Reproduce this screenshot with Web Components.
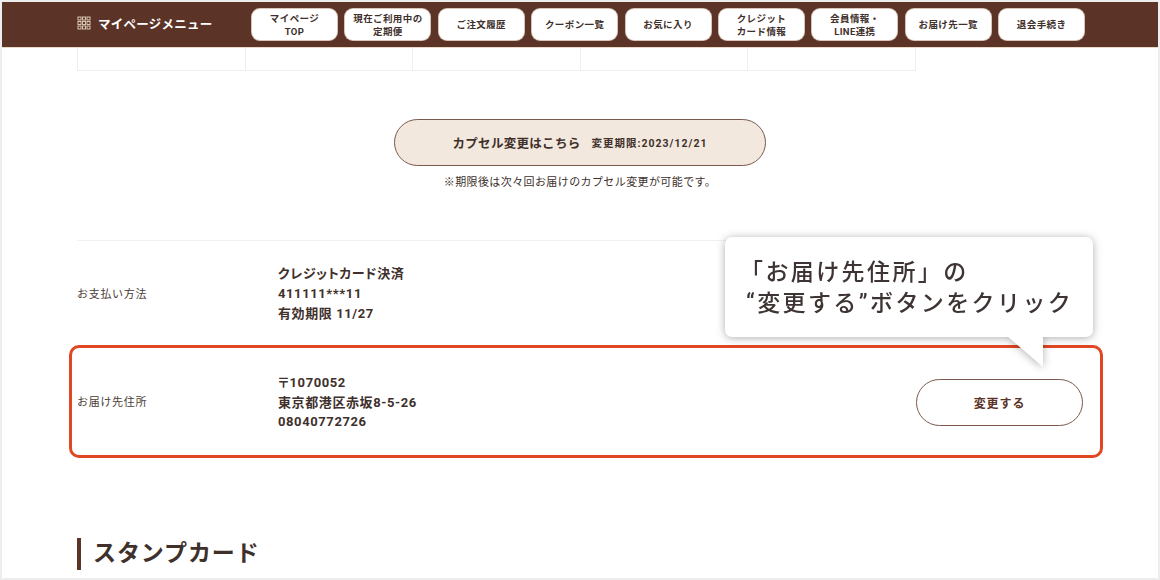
<!DOCTYPE html>
<html lang="ja">
<head>
<meta charset="utf-8">
<title>マイページ</title>
<style>
    html, body { margin: 0; padding: 0; background: #fff; }
    body { font-family: "Roboto", "Noto Sans CJK JP", sans-serif; color: #40302c; }
</style>
</head>
<body>
<mp-page>
    <mp-menubar slot="top">
        <mp-menubtn>マイページ<br>TOP</mp-menubtn>
        <mp-menubtn>現在ご利用中の<br>定期便</mp-menubtn>
        <mp-menubtn>ご注文履歴</mp-menubtn>
        <mp-menubtn>クーポン一覧</mp-menubtn>
        <mp-menubtn>お気に入り</mp-menubtn>
        <mp-menubtn>クレジット<br>カード情報</mp-menubtn>
        <mp-menubtn>会員情報・<br>LINE連携</mp-menubtn>
        <mp-menubtn>お届け先一覧</mp-menubtn>
        <mp-menubtn>退会手続き</mp-menubtn>
    </mp-menubar>
    <mp-stubtable></mp-stubtable>
    <mp-capsule>
        カプセル変更はこちら
        <span slot="limit">変更期限:2023/12/21</span>
        <span slot="note">※期限後は次々回お届けのカプセル変更が可能です。</span>
    </mp-capsule>
    <mp-inforow first label="お支払い方法">
        クレジットカード決済<br>411111***11<br>有効期限 11/27
    </mp-inforow>
    <mp-inforow label="お届け先住所" action="変更する" highlight>
        〒1070052<br>東京都港区赤坂8-5-26<br>08040772726
    </mp-inforow>
    <mp-heading>スタンプカード</mp-heading>
    <mp-callout>「お届け先住所」の<br>“変更する”ボタンをクリック</mp-callout>
</mp-page>

<script>
const FONT = '"Roboto", "Noto Sans CJK JP", sans-serif';

function make(name, html) {
    const tpl = document.createElement('template');
    tpl.innerHTML = html;
    customElements.define(name, class extends HTMLElement {
        constructor() {
            super();
            this.attachShadow({ mode: 'open' });
            this.shadowRoot.appendChild(tpl.content.cloneNode(true));
        }
    });
}

make('mp-page', `
    <style>
        :host {
            display: block;
            position: relative;
            box-sizing: border-box;
            width: 1160px;
            height: 580px;
            border: 2px solid #eeeeee;
            overflow: hidden;
            background: #fff;
            font-family: ${FONT};
        }
    </style>
    <slot name="top"></slot>
    <slot></slot>
`);

make('mp-menubar', `
    <style>
        :host {
            display: flex;
            align-items: center;
            box-sizing: border-box;
            height: 46px;
            padding: 0 0 0 75px;
            background: #5b3427;
            border-bottom: 1px solid #ead8cb;
        }
        .title {
            display: flex;
            align-items: center;
            gap: 7px;
            width: 175px;
            margin-top: -3px;
            color: #fff;
            font-size: 12.5px;
            font-weight: 700;
            letter-spacing: 0.25px;
            white-space: nowrap;
        }
        svg { display: block; flex: none; }
        .btns { display: flex; gap: 8.4px; }
    </style>
    <div class="title">
        <svg width="14" height="14" viewBox="0 0 14 14" fill="none" stroke="#d9c4b4" stroke-width="1">
            <rect x="1" y="1" width="3" height="3"/><rect x="5.5" y="1" width="3" height="3"/><rect x="10" y="1" width="3" height="3"/>
            <rect x="1" y="5.5" width="3" height="3"/><rect x="5.5" y="5.5" width="3" height="3"/><rect x="10" y="5.5" width="3" height="3"/>
            <rect x="1" y="10" width="3" height="3"/><rect x="5.5" y="10" width="3" height="3"/><rect x="10" y="10" width="3" height="3"/>
        </svg>
        <span>マイページメニュー</span>
    </div>
    <div class="btns"><slot></slot></div>
`);

make('mp-menubtn', `
    <style>
        :host {
            display: flex;
            align-items: center;
            justify-content: center;
            box-sizing: border-box;
            width: 85px;
            height: 31px;
            background: #fff;
            border-radius: 8px;
            box-shadow: 0 0 0 1px #d8c5b8;
            color: #40302c;
            font-size: 9.5px;
            font-weight: 700;
            line-height: 13px;
            letter-spacing: 0.4px;
            text-align: center;
        }
    </style>
    <div><slot></slot></div>
`);

make('mp-stubtable', `
    <style>
        :host {
            display: grid;
            grid-template-columns: repeat(5, 167.6px);
            box-sizing: border-box;
            width: 839px;
            height: 23px;
            margin-left: 75px;
            border-bottom: 1px solid #eeeeee;
            border-left: 1px solid #eeeeee;
        }
        div { border-right: 1px solid #eeeeee; }
    </style>
    <div></div><div></div><div></div><div></div><div></div>
`);

make('mp-capsule', `
    <style>
        :host {
            display: flex;
            flex-direction: column;
            align-items: center;
            margin-top: 48px;
            padding-bottom: 50px;
            border-bottom: 1px solid #f0f0f0;
            margin-left: 75px;
            width: 1006px;
        }
        .btn {
            display: flex;
            align-items: center;
            justify-content: center;
            gap: 11px;
            box-sizing: border-box;
            width: 372px;
            height: 47px;
            background: #f3e8dd;
            border: 1px solid #7b5a4d;
            border-radius: 24px;
            color: #40302c;
            font-size: 12.5px;
            font-weight: 700;
            letter-spacing: 0.3px;
        }
        .limit { font-size: 10.5px; letter-spacing: 1px; }
        .note {
            margin-top: 9px;
            font-size: 11px;
            line-height: 15px;
            letter-spacing: 0.4px;
            color: #40302c;
        }
    </style>
    <div class="btn"><span><slot></slot></span><span class="limit"><slot name="limit"></slot></span></div>
    <div class="note"><slot name="note"></slot></div>
`);

class MpInforow extends HTMLElement {
    constructor() {
        super();
        this.attachShadow({ mode: 'open' });
        const action = this.getAttribute('action');
        const box = this.hasAttribute('highlight') ? '<div class="mark"></div>' : '';
        const btn = action ? `<div class="action">${action}</div>` : '';
        this.shadowRoot.innerHTML = `
            <style>
                :host {
                    display: flex;
                    align-items: center;
                    position: relative;
                    box-sizing: border-box;
                    width: 1006px;
                    height: 109px;
                    margin-left: 75px;
                }
                :host([first]) { height: 106px; }
                .label { width: 201px; flex: none; margin-top: -2px; font-size: 11px; letter-spacing: 0.7px; color: #4a3a36; }
                .value {
                    flex: 1;
                    padding-top: 2px;
                    font-size: 13px;
                    font-weight: 700;
                    line-height: 19.6px;
                    letter-spacing: 0.6px;
                    font-feature-settings: "palt";
                    color: #40302c;
                }
                :host([first]) .value { padding-top: 0; line-height: 20px; }
                .action {
                    display: flex;
                    align-items: center;
                    justify-content: center;
                    box-sizing: border-box;
                    width: 167px;
                    height: 47px;
                    margin-top: 2px;
                    border: 1px solid #7b5a4d;
                    border-radius: 24px;
                    font-size: 12px;
                    font-weight: 700;
                    letter-spacing: 0.9px;
                    color: #5b3427;
                }
                .mark {
                    position: absolute;
                    left: -8px;
                    right: -20px;
                    top: -2px;
                    bottom: -2px;
                    border: 3px solid #e04722;
                    border-radius: 10px;
                    pointer-events: none;
                }
            </style>
            <div class="label">${this.getAttribute('label')}</div>
            <div class="value"><slot></slot></div>
            ${btn}${box}`;
    }
}
customElements.define('mp-inforow', MpInforow);

make('mp-heading', `
    <style>
        :host {
            display: block;
            box-sizing: border-box;
            width: 400px;
            height: 32px;
            margin: 82px 0 0 75px;
            padding-left: 12px;
            border-left: 4px solid #5b3427;
            font-size: 23px;
            font-weight: 700;
            line-height: 32px;
            letter-spacing: 0.9px;
            color: #40302c;
        }
    </style>
    <slot></slot>
`);

make('mp-callout', `
    <style>
        :host {
            position: absolute;
            left: 723px;
            top: 235px;
            display: block;
            width: 368px;
            filter: drop-shadow(0 1px 4px rgba(0,0,0,.32));
        }
        .box {
            box-sizing: border-box;
            height: 100px;
            padding: 20px 0 0 21px;
            background: #fff;
            border-radius: 7px;
            font-size: 23px;
            font-weight: 500;
            line-height: 31px;
            letter-spacing: 2.4px;
            text-indent: -6px;
            color: #3e3433;
            white-space: nowrap;
        }
        svg { display: block; position: absolute; left: 276px; top: 99px; }
    </style>
    <div class="box"><slot></slot></div>
    <svg width="44" height="32" viewBox="0 0 44 32"><polygon points="6,0 42,0 42,31" fill="#fff"/></svg>
`);
</script>
</body>
</html>
